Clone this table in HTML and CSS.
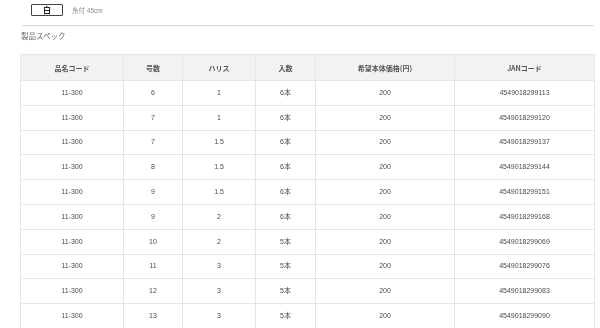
FILE: index.html
```html
<!DOCTYPE html>
<html lang="ja">
<head>
<meta charset="utf-8">
<link rel="stylesheet" href="styles.css">
</head>
<body>
<div class="page">
  <div class="variant">
    <span class="swatch">白</span>
    <span class="variant-note">糸付 45cm</span>
  </div>
  <hr class="divider">
  <h2 class="spec-title">製品スペック</h2>
  <table class="spec">
    <colgroup>
      <col class="c1"><col class="c2"><col class="c3"><col class="c4"><col class="c5"><col class="c6">
    </colgroup>
    <thead>
      <tr><th>品名コード</th><th>号数</th><th>ハリス</th><th>入数</th><th>希望本体価格(円)</th><th>JANコード</th></tr>
    </thead>
    <tbody>
      <tr><td>11-300</td><td>6</td><td>1</td><td>6本</td><td>200</td><td>4549018299113</td></tr>
      <tr><td>11-300</td><td>7</td><td>1</td><td>6本</td><td>200</td><td>4549018299120</td></tr>
      <tr><td>11-300</td><td>7</td><td>1.5</td><td>6本</td><td>200</td><td>4549018299137</td></tr>
      <tr><td>11-300</td><td>8</td><td>1.5</td><td>6本</td><td>200</td><td>4549018299144</td></tr>
      <tr><td>11-300</td><td>9</td><td>1.5</td><td>6本</td><td>200</td><td>4549018299151</td></tr>
      <tr><td>11-300</td><td>9</td><td>2</td><td>6本</td><td>200</td><td>4549018299168</td></tr>
      <tr><td>11-300</td><td>10</td><td>2</td><td>5本</td><td>200</td><td>4549018299069</td></tr>
      <tr><td>11-300</td><td>11</td><td>3</td><td>5本</td><td>200</td><td>4549018299076</td></tr>
      <tr><td>11-300</td><td>12</td><td>3</td><td>5本</td><td>200</td><td>4549018299083</td></tr>
      <tr><td>11-300</td><td>13</td><td>3</td><td>5本</td><td>200</td><td>4549018299090</td></tr>
    </tbody>
  </table>
</div>
</body>
</html>
```
FILE: styles.css
```css
html, body {
  margin: 0;
  padding: 0;
  background: #fff;
}
body {
  font-family: "Liberation Sans", "Noto Sans CJK JP", sans-serif;
  color: #555;
}
.page {
  padding: 4px 0 0 20px;
  width: 574px;
  filter: grayscale(1);
}
.variant {
  display: flex;
  align-items: center;
  height: 12px;
  padding-left: 11px;
}
.swatch {
  box-sizing: border-box;
  width: 32px;
  height: 12px;
  border: 1px solid #444;
  border-radius: 1px;
  display: flex;
  align-items: center;
  justify-content: center;
  font-size: 8px;
  line-height: 10px;
  font-weight: bold;
  color: #222;
  font-family: "Noto Sans CJK JP", sans-serif;
}
.variant-note {
  margin-left: 9px;
  font-size: 6.5px;
  color: #8a8a8a;
  font-family: "Liberation Sans", "Noto Sans CJK JP", sans-serif;
}
.divider {
  margin: 9px 0 0 2px;
  border: 0;
  height: 1px;
  background: #dcdcdc;
  box-shadow: 0 1px 1px rgba(0,0,0,0.06);
}
.spec-title {
  margin: 4px 0 0 1px;
  font-size: 7.5px;
  line-height: 12px;
  font-weight: normal;
  color: #666;
  font-family: "Noto Sans CJK JP", sans-serif;
}
.spec {
  margin-top: 12px;
  border-collapse: collapse;
  table-layout: fixed;
  width: 574px;
  font-size: 7px;
}
.c1 { width: 103px; }
.c2 { width: 59px; }
.c3 { width: 73px; }
.c4 { width: 60px; }
.c5 { width: 139px; }
.c6 { width: 140px; }
.spec th, .spec td {
  border: 1px solid #e6e6e6;
  text-align: center;
  padding: 0;
  line-height: 10px;
}
.spec th {
  background: #f2f2f2;
  height: 25px;
  font-weight: bold;
  color: #555;
  font-family: "Noto Sans CJK JP", sans-serif;
}
.spec td {
  height: 23.8px;
  color: #4a4a4a;
}
```
